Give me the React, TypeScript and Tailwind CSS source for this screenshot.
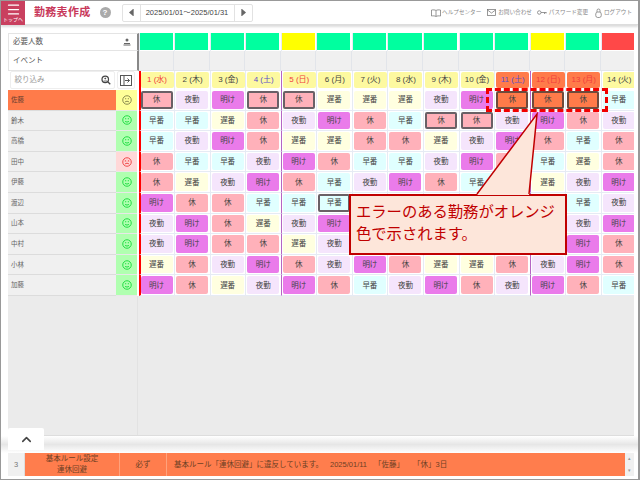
import { ChevronUp, Menu } from 'lucide-react';

const days = ['1 (水)', '2 (木)', '3 (金)', '4 (土)', '5 (日)', '6 (月)', '7 (火)', '8 (水)', '9 (木)', '10 (金)', '11 (土)', '12 (日)', '13 (月)', '14 (火)'];
const redDays = [0, 4, 11, 12];
const blueDays = [3, 10];
const errorDays = [10, 11, 12];

// "_" = cell sits under the callout, only the colour can be seen
const staff = [
  { name: '佐藤', mood: 'warn', shifts: '休* 夜勤 明け 休* 休* 遅番 遅番 遅番 夜勤 明け 休! 休! 休! 早番' },
  { name: '鈴木', mood: 'ok', shifts: '早番 早番 遅番 休 夜勤 明け 休 早番 休* 休* 夜勤 明け 休 夜勤' },
  { name: '高橋', mood: 'ok', shifts: '早番 夜勤 明け 休 遅番 遅番 休 休 遅番 夜勤 明け 休 早番 休' },
  { name: '田中', mood: 'bad', shifts: '休 早番 早番 夜勤 明け 休 早番 早番 夜勤 明け 休_ 早番 遅番 休' },
  { name: '伊藤', mood: 'ok', shifts: '休 遅番 夜勤 明け 休 早番 夜勤 明け 休 早番 休_ 遅番 夜勤 明け' },
  { name: '渡辺', mood: 'ok', shifts: '明け 休 休 早番 早番 早番* 休_ 休_ 休_ 休_ 休_ 休_ 早番 夜勤' },
  { name: '山本', mood: 'ok', shifts: '夜勤 明け 休 遅番 夜勤 明け 休_ 休_ 休_ 休_ 休_ 休_ 夜勤 明け' },
  { name: '中村', mood: 'ok', shifts: '夜勤 明け 休 休 遅番 夜勤 休_ 休_ 休_ 休_ 休_ 休_ 明け 休' },
  { name: '小林', mood: 'ok', shifts: '遅番 休 夜勤 明け 休 夜勤 明け 休 遅番 遅番 休 夜勤 明け 休' },
  { name: '加藤', mood: 'ok', shifts: '明け 休 遅番 夜勤 明け 休 早番 夜勤 明け 休 夜勤 明け 休 早番' },
];

const shiftColors: Record<string, string> = {
  休: 'bg-[#ffb1ba]',
  夜勤: 'bg-[#f5e5fc]',
  明け: 'bg-[#ea7bea]',
  早番: 'bg-[#e0ffff]',
  遅番: 'bg-[#ffffe0]',
};

function dayLine(i: number) {
  if (i === 0) return 'border-l-2 border-l-[#ff0000] pl-0';
  if (i === 4 || i === 11) return 'border-l border-l-[#b565c4] pl-[1px]';
  return 'border-l border-l-[#e6ebf4] pl-[1px]';
}

function Face({ mood }: { mood: string }) {
  const color = mood === 'ok' ? '#22dd44' : mood === 'bad' ? '#f04848' : '#8a8a50';
  return (
    <svg width="10" height="10" viewBox="0 0 20 20" fill="none" stroke={color} strokeWidth="2">
      <circle cx="10" cy="10" r="8.500" />
      {mood === 'bad' ? (
        <path d="M5.500 6.500l3 2.500m0-2.500l-3 2.500M11.500 6.500l3 2.500m0-2.500l-3 2.500" strokeWidth="1.500" />
      ) : (
        <path d="M6 7.500h2.500M11.500 7.500H14" />
      )}
      {mood === 'ok' ? <path d="M6 12.500c2 2 6 2 8 0" /> : <path d="M6 14c2-2 6-2 8 0" />}
    </svg>
  );
}

function Shift({ value }: { value: string }) {
  const err = value.endsWith('!');
  const sel = value.endsWith('*');
  const hidden = value.endsWith('_');
  const label = value.replace(/[!*_]/, '');
  return (
    <div
      className={`w-[32px] h-[17.500px] rounded-[2px] flex items-center justify-center text-[7.500px] text-[#444] ${
        err ? 'bg-[#ff7b4a] border-2 border-[#6e4a3c]' : shiftColors[label]
      } ${sel ? 'border-2 border-[#6a6066]' : ''}`}
    >
      {hidden ? '' : label}
    </div>
  );
}

export default function App() {
  return (
    <div className="relative w-[640px] h-[480px] overflow-hidden bg-white border border-r-2 border-[#999] flex flex-col font-['Liberation_Sans','Noto_Sans_CJK_JP',sans-serif] text-[#555]">
      {/* Header */}
      <header className="h-[24px] shrink-0 flex items-center border-b border-[#ddd] shadow-[0_2px_2px_#ddd]">
        <div className="w-[24px] h-[24px] bg-[#c9405f] text-white flex flex-col items-center justify-center">
          <Menu size={15} strokeWidth={2} className="-mt-[2px]" />
          <span className="text-[5px] leading-[5px]">トップへ</span>
        </div>
        <span className="ml-[9px] text-[11px] font-bold tracking-[0.3px] text-[#c8385a]">勤務表作成</span>
        <span className="ml-[9px] w-[11px] h-[11px] rounded-full bg-[#aaa] text-white text-[8px] font-bold flex items-center justify-center">?</span>
        <div className="ml-[11px] w-[131px] h-[18px] flex items-center border border-[#e2e2e2] rounded-[2px] text-[7.500px] text-[#444]">
          <div className="w-[18px] h-full flex items-center justify-center border-r border-[#e2e2e2]">
            <svg width="5" height="7" viewBox="0 0 5 7"><path d="M4 0v7L0 3.500z" fill="#666" /><path d="M4 0h1v7H4z" fill="#999" /></svg>
          </div>
          <span className="flex-1 text-center whitespace-nowrap">2025/01/01～2025/01/31</span>
          <div className="w-[18px] h-full flex items-center justify-center border-l border-[#e2e2e2]">
            <svg width="5" height="7" viewBox="0 0 5 7"><path d="M1 0v7l4-3.500z" fill="#666" /><path d="M0 0h1v7H0z" fill="#999" /></svg>
          </div>
        </div>
        <div className="ml-auto mr-[6px] flex items-center text-[5.600px] text-[#888] whitespace-nowrap">
          <svg width="10" height="8" viewBox="0 0 20 16" fill="none" stroke="#777" strokeWidth="1.500">
            <path d="M10 3C8 1.500 4 1.500 1 2v12c3-.5 7-.5 9 1 2-1.500 6-1.500 9-1V2c-3-.5-7-.5-9 1zM10 3v12" />
          </svg>
          <span className="ml-[1.500px]">ヘルプセンター</span>
          <svg className="ml-[6px]" width="9" height="7" viewBox="0 0 18 14" fill="none" stroke="#777" strokeWidth="1.500">
            <rect x="1" y="1" width="16" height="12" />
            <path d="M1 2l8 6 8-6" />
          </svg>
          <span className="ml-[2px]">お問い合わせ</span>
          <svg className="ml-[5px]" width="10" height="5" viewBox="0 0 20 10" fill="none" stroke="#777" strokeWidth="1.500">
            <circle cx="4.500" cy="5" r="3.500" />
            <path d="M8 5h11M15 5v3M18 5v2" />
          </svg>
          <span className="ml-[2px]">パスワード変更</span>
          <svg className="ml-[7px]" width="7" height="10" viewBox="0 0 14 20" fill="none" stroke="#777" strokeWidth="1.500">
            <rect x="1.500" y="8" width="11" height="11" rx="4" />
            <path d="M4 8V5a3 3 0 016 0v3" />
          </svg>
          <span className="ml-[2px]">ログアウト</span>
        </div>
      </header>

      {/* Table */}
      <main className="flex-1 min-h-0 pt-[8px] pl-[7px] pr-[4px] flex flex-col">
        <div className="grid grid-cols-[108px_22.500px_repeat(14,35.570px)] grid-rows-[18px_20px_19px_repeat(10,20.600px)] w-[626px] overflow-hidden text-[7.500px]">
          <div className="col-span-2 flex items-center justify-between pl-[4px] pr-[6px] border border-[#e4e4e4] border-r-2 border-r-[#888] text-[#555]">
            <span>必要人数</span>
            <svg width="8" height="8" viewBox="0 0 16 16" fill="#666">
              <circle cx="8" cy="4" r="3" />
              <path d="M2 10h12v2H2zM1 13h14v2H1z" />
            </svg>
          </div>
          {days.map((_, i) => (
            <div key={i} className="pr-[1.500px] pb-[1px] border-l border-l-[#e6ebf4]">
              <div className={`h-full ${i === 13 ? 'bg-[#ff4848]' : i === 4 || i === 11 ? 'bg-[#ffff00]' : 'bg-[#00ff9f]'}`} />
            </div>
          ))}

          <div className="col-span-2 flex items-center pl-[4px] border border-t-0 border-[#e4e4e4] border-r-2 border-r-[#888]">イベント</div>
          {days.map((_, i) => (
            <div key={i} className="bg-[#f0f0f0] border-r border-b border-[#e2e5ea]" />
          ))}

          <div className="col-span-2 flex items-center gap-[2px] pl-[1.500px] pb-[1px]">
            <div className="w-[105px] h-[18px] flex items-center justify-between pl-[4px] pr-[3px] border border-[#eee] rounded-[2px] text-[#999]">
              <span>絞り込み</span>
              <svg width="10" height="10" viewBox="0 0 20 20" fill="none" stroke="#444" strokeWidth="2.500">
                <circle cx="8.500" cy="8.500" r="6.500" />
                <path d="M13.500 13.500L18.500 18.500" />
                <circle cx="8.500" cy="7" r="1.500" fill="#444" strokeWidth="0.500" />
                <path d="M5 12h7" strokeWidth="1.500" />
              </svg>
            </div>
            <div className="w-[18px] h-[18px] flex items-center justify-center border border-[#eee] rounded-[2px]">
              <svg width="12" height="11" viewBox="0 0 24 22" fill="none" stroke="#555" strokeWidth="2">
                <rect x="1" y="1" width="22" height="20" />
                <path d="M8 1v20M10 11h9M15 7l4 4-4 4" />
              </svg>
            </div>
          </div>
          {days.map((d, i) => (
            <div key={d} className={`flex items-center pb-[1.500px] ${dayLine(i)}`}>
              <div
                className={`w-[33px] h-[16px] rounded-[2px] flex items-center justify-center text-[8px] whitespace-nowrap ${
                  errorDays.includes(i) ? 'bg-[#ff7b4a]' : 'bg-[#fdf9a0]'
                } ${redDays.includes(i) ? 'text-[#f03c3c]' : blueDays.includes(i) ? 'text-[#5a50c8]' : 'text-[#444]'}`}
              >
                {d}
              </div>
            </div>
          ))}

          {staff.map((s) => (
            <div key={s.name} className="contents">
              <div
                className={`flex items-center pl-[3px] text-[6.500px] border-b border-[#dcdcdc] ${
                  s.mood === 'warn' ? 'bg-[#ff7b4a] text-[#664030]' : 'bg-[#f0f0f0] text-[#666]'
                }`}
              >
                {s.name}
              </div>
              <div className="pr-[1.500px]">
                <div
                  className={`h-full flex items-center justify-center border-b border-[#e8e8e8] ${
                    s.mood === 'warn' ? 'bg-[#ffff99]' : s.mood === 'bad' ? 'bg-[#ffd8d8]' : 'bg-[#b0ffb0]'
                  }`}
                >
                  <Face mood={s.mood} />
                </div>
              </div>
              {s.shifts.split(' ').map((v, i) => (
                <div key={i} className={`flex items-center border-b border-b-[#e6ebf4] ${dayLine(i)}`}>
                  <Shift value={v} />
                </div>
              ))}
            </div>
          ))}
        </div>
        <div className="flex-1 w-[626px] bg-[#ebebeb] border-b border-[#ddd] flex">
          <div className="w-[130px] border-r border-[#e2e2e2]" />
        </div>
      </main>

      {/* Bottom band */}
      <div className="h-[17px] shrink-0 bg-gradient-to-b from-white via-[#e6e6e6] to-white" />
      <footer className="h-[26px] shrink-0 pl-[7px] pr-[4px] pb-[3px] flex text-[7.500px] text-[#6e4024]">
        <div className="w-[17px] bg-[#f0f0f0] text-[#777] flex items-center justify-center border-r border-[#ddd]">3</div>
        <div className="w-[95px] bg-[#ff7d4d] border-r border-[#ffa27c] flex flex-col items-center justify-center leading-[10.500px]">
          <span>基本ルール設定</span>
          <span>連休回避</span>
        </div>
        <div className="w-[47px] bg-[#ff7d4d] border-r border-[#ffa27c] flex items-center justify-center">必ず</div>
        <div className="w-[458px] bg-[#ff7d4d] flex items-center pl-[7px] whitespace-nowrap">
          <span>基本ルール「連休回避」に違反しています。</span>
          <span className="ml-[7px]">2025/01/11</span>
          <span className="ml-[7px]">「佐藤」</span>
          <span className="ml-[9px]">「休」3日</span>
        </div>
        <div className="w-[9px] bg-[#f0f0f0] text-[#999] text-[5px] flex flex-col items-center justify-between py-[2px]">
          <span>▴</span>
          <span>▾</span>
        </div>
      </footer>

      {/* Collapse tab */}
      <div className="absolute left-[7px] top-[427px] w-[36px] h-[22px] bg-white rounded-t-[2px] flex items-center justify-center">
        <ChevronUp size={15} strokeWidth={2.500} color="#444" />
      </div>

      {/* Error highlight */}
      <div className="absolute left-[485px] top-[87px] w-[122px] h-[24px] border-[3px] border-dashed border-[#f00000]" />

      {/* Callout */}
      <div className="absolute left-[348px] top-[193px] w-[218px] h-[61px] bg-[#fde6da] border-2 border-[#c00000] pl-[5px] pt-[5px] text-[15.300px] leading-[22px] text-[#c00000] whitespace-nowrap">
        エラーのある勤務がオレンジ
        <br />
        色で示されます。
      </div>
      <svg className="absolute left-[470px] top-[108px]" width="70" height="90" viewBox="0 0 70 90">
        <polygon points="6,86 66,5 58,86" fill="#fde6da" />
        <path d="M6 85L66 5L58 85" fill="none" stroke="#c00000" strokeWidth="1.500" />
      </svg>
    </div>
  );
}
